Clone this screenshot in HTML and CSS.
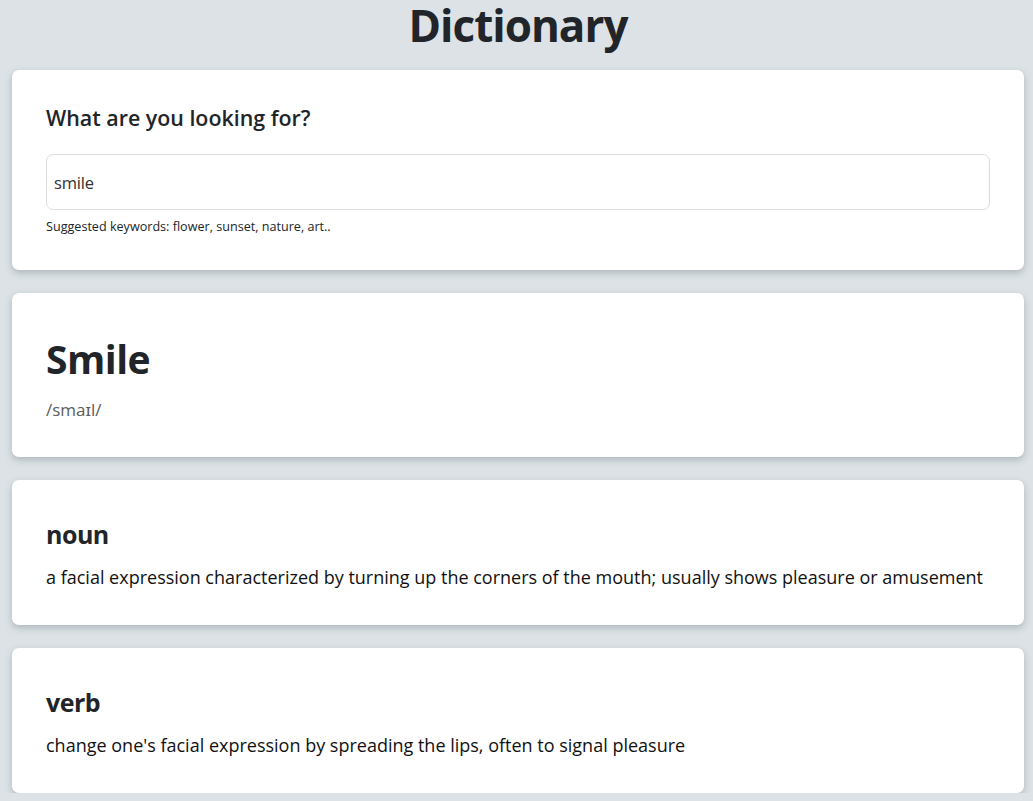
FILE: index.html
```html
<!DOCTYPE html>
<html lang="en">
<head>
<meta charset="utf-8">
<title>Dictionary</title>
<link rel="stylesheet" href="styles.css">
</head>
<body>
<div class="app">
  <h1 class="app-title">Dictionary</h1>
  <section class="card search-card">
    <h2 class="search-label">What are you looking for?</h2>
    <div class="search-field"><span class="search-value">smile</span></div>
    <p class="hint">Suggested keywords: flower, sunset, nature, art..</p>
  </section>
  <section class="card word-card">
    <h2 class="word">Smile</h2>
    <p class="phonetic">/smaɪl/</p>
  </section>
  <section class="card meaning-card">
    <h3 class="pos">noun</h3>
    <p class="definition">a facial expression characterized by turning up the corners of the mouth; usually shows pleasure or amusement</p>
  </section>
  <section class="card meaning-card">
    <h3 class="pos">verb</h3>
    <p class="definition">change one's facial expression by spreading the lips, often to signal pleasure</p>
  </section>
</div>
</body>
</html>
```
FILE: styles.css
```css
* { box-sizing: border-box; }
html, body { margin: 0; padding: 0; }
body {
  background: #dce2e6;
  color: #212529;
  font-family: "Open Sans", "Noto Sans", sans-serif;
}
.app {
  padding: 0 9px 0 12px;
  display: flex;
  flex-direction: column;
  gap: 23px;
}
.app-title {
  margin: 0 0 -2px;
  text-align: center;
  font-size: 44px;
  font-weight: 700;
  line-height: 48px;
  letter-spacing: -1px;
  padding-top: 1px;
}
.card {
  background: #fff;
  border-radius: 7px;
  box-shadow: 0 3px 7px rgba(90, 105, 115, 0.35);
  padding: 0 34px;
}
.search-card { height: 200px; padding-top: 34px; }
.search-label {
  margin: 0;
  font-size: 21.4px;
  font-weight: 600;
  line-height: 28px;
}
.search-field {
  margin-top: 22px;
  height: 56px;
  border: 1px solid #dcdcdc;
  border-radius: 7px;
  display: flex;
  align-items: center;
  padding: 0 7px;
}
.search-value { font-size: 16.5px; color: #333; letter-spacing: -0.2px; }
.hint {
  margin: 9px 0 0;
  font-size: 12.6px;
  line-height: 16px;
}
.word-card { height: 164px; padding-top: 40px; }
.word {
  margin: 0;
  font-size: 39px;
  font-weight: 700;
  line-height: 52px;
  letter-spacing: -0.5px;
}
.phonetic {
  margin: 13px 0 0;
  font-size: 17px;
  color: #5c5c5c;
  line-height: 24px;
}
.meaning-card { height: 145px; padding-top: 37px; }
.pos {
  margin: 0;
  font-size: 25px;
  font-weight: 700;
  line-height: 34px;
  letter-spacing: -0.5px;
}
.definition {
  margin: 13px 0 0;
  font-size: 18px;
  line-height: 26px;
  color: #111;
}
```
